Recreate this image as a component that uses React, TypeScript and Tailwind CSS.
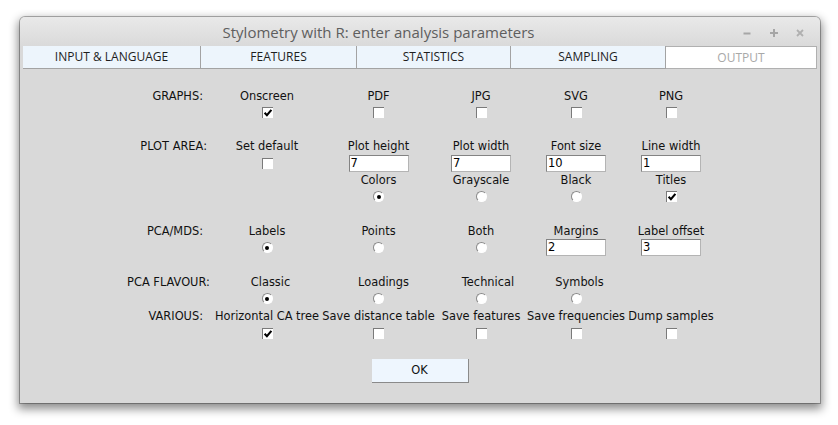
import React from "react";

const Check = ({ checked }: { checked?: boolean }) => (
  <div className="relative w-[11px] h-[11px] bg-white border-t border-l border-[#7a7a7a]">
    {checked && (
      <svg className="absolute left-[0px] top-[0px]" width="10" height="10" viewBox="0 0 10 10">
        <path d="M1.6 4.8 L3.9 7.2 L8.4 1.8" stroke="#000" strokeWidth="2.1" fill="none" />
      </svg>
    )}
  </div>
);

const Radio = ({ checked }: { checked?: boolean }) => (
  <div className="w-[11px] h-[11px] rounded-full bg-white border border-t-[#8a8a8a] border-l-[#8a8a8a] border-r-white border-b-white flex items-center justify-center">
    {checked && <div className="w-[4px] h-[4px] rounded-full bg-black" />}
  </div>
);

const Entry = ({ v }: { v: string }) => (
  <div className="w-[60px] h-[17px] bg-white border border-[#b4b4b4] border-t-[#838383] border-l-[#838383] pl-[1px] text-[11.5px] leading-[15px] text-black">
    {v}
  </div>
);

const L = ({ t }: { t: string }) => <span className="whitespace-nowrap">{t}</span>;

type Row = { h: string; label?: boolean; cells?: React.ReactNode[] };

const rows: Row[] = [
  {
    h: "h-[17px]",
    label: true,
    cells: [
      <div className="w-full text-right pr-[10px]">GRAPHS:</div>,
      <L t="Onscreen" />,
      <L t="PDF" />,
      <L t="JPG" />,
      <L t="SVG" />,
      <L t="PNG" />,
    ],
  },
  {
    h: "h-[17px]",
    cells: [null, <Check checked />, <Check />, <Check />, <Check />, <Check />],
  },
  { h: "h-[16px]" },
  {
    h: "h-[17px]",
    label: true,
    cells: [
      <div className="w-full text-right pr-[6px]">PLOT AREA:</div>,
      <L t="Set default" />,
      <L t="Plot height" />,
      <L t="Plot width" />,
      <L t="Font size" />,
      <L t="Line width" />,
    ],
  },
  {
    h: "h-[18px]",
    cells: [null, <Check />, <Entry v="7" />, <Entry v="7" />, <Entry v="10" />, <Entry v="1" />],
  },
  {
    h: "h-[16px]",
    label: true,
    cells: [null, null, <L t="Colors" />, <L t="Grayscale" />, <L t="Black" />, <L t="Titles" />],
  },
  {
    h: "h-[17px]",
    cells: [null, null, <Radio checked />, <Radio />, <Radio />, <Check checked />],
  },
  { h: "h-[17px]" },
  {
    h: "h-[17px]",
    label: true,
    cells: [
      <div className="w-full text-right pr-[10px]">PCA/MDS:</div>,
      <L t="Labels" />,
      <L t="Points" />,
      <L t="Both" />,
      <L t="Margins" />,
      <L t="Label offset" />,
    ],
  },
  {
    h: "h-[17px]",
    cells: [null, <Radio checked />, <Radio />, <Radio />, <Entry v="2" />, <Entry v="3" />],
  },
  { h: "h-[17px]" },
  {
    h: "h-[17px]",
    label: true,
    cells: [
      <div className="w-full text-center">PCA FLAVOUR:</div>,
      <div className="pl-[7px]">Classic</div>,
      <div className="pl-[10px]">Loadings</div>,
      <div className="pl-[14px]">Technical</div>,
      <div className="pl-[7px]">Symbols</div>,
      null,
    ],
  },
  {
    h: "h-[17px]",
    cells: [null, <Radio checked />, <Radio />, <Radio />, <Radio />, null],
  },
  {
    h: "h-[18px]",
    label: true,
    cells: [
      <div className="w-full text-right pr-[10px]">VARIOUS:</div>,
      <L t="Horizontal CA tree" />,
      <L t="Save distance table" />,
      <L t="Save features" />,
      <L t="Save frequencies" />,
      <L t="Dump samples" />,
    ],
  },
  {
    h: "h-[17px]",
    cells: [null, <Check checked />, <Check />, <Check />, <Check />, <Check />],
  },
];

const tabs = [
  { t: "INPUT & LANGUAGE", w: "w-[178px]" },
  { t: "FEATURES", w: "w-[156px]" },
  { t: "STATISTICS", w: "w-[154px]" },
  { t: "SAMPLING", w: "w-[155px]" },
];

export default function App() {
  return (
    <div className="w-[838px] h-[425px] bg-white pt-[17px] pl-[20px] overflow-hidden font-['DejaVu_Sans',sans-serif]">
      <div className="w-[800px] h-[386px] bg-[#d9d9d9] rounded-t-[5px] shadow-[0_0_0_1px_rgba(0,0,0,0.28),0_4px_10px_2px_rgba(0,0,0,0.45)] flex flex-col">
        {/* title bar */}
        <div className="h-[29px] shrink-0 flex items-center rounded-t-[5px] bg-linear-to-b from-[#e9e9e9] to-[#dadada]">
          <div className="flex-1 text-center pt-[2px] font-['Open_Sans',sans-serif] text-[15px] text-[#5e5e5e]">
            Stylometry with R: enter analysis parameters
          </div>
          <div className="w-[83px] h-full flex items-center pt-[3px]">
            <svg className="ml-[6px]" width="8" height="8" viewBox="0 0 8 8">
              <path d="M0.5 4.5 H7.5" stroke="#a6a6a6" strokeWidth="2" />
            </svg>
            <svg className="ml-[19px]" width="8" height="8" viewBox="0 0 8 8">
              <path d="M0 4 H8 M4 0 V8" stroke="#a6a6a6" strokeWidth="2" />
            </svg>
            <svg className="ml-[18px]" width="8" height="8" viewBox="0 0 8 8">
              <path d="M1 1 L7 7 M7 1 L1 7" stroke="#b0b0b0" strokeWidth="1.8" />
            </svg>
          </div>
        </div>
        {/* tabs */}
        <div className="h-[23px] shrink-0 flex px-[3px] font-['Open_Sans',sans-serif] text-[12px]">
          {tabs.map((tb) => (
            <div
              key={tb.t}
              className={`${tb.w} h-full bg-[#edf5fc] border-r border-b border-[#a3a3a3] flex items-center justify-center text-[#1e1e1e]`}
            >
              {tb.t}
            </div>
          ))}
          <div className="w-[151px] h-full bg-white border-t border-r border-b border-[#b0b0b0] flex items-center justify-center text-[#a8a8a8]">
            OUTPUT
          </div>
        </div>
        {/* content */}
        <div className="flex flex-col items-center pt-[18px] text-[11.4px] text-[#111]">
          <div className="grid grid-cols-[89px_108px_115px_90px_100px_90px]">
            {rows.map((r, i) =>
              r.cells ? (
                r.cells.map((c, j) => (
                  <div
                    key={`${i}-${j}`}
                    className={`${r.h} ${r.label ? "pt-[2px]" : ""} flex items-center justify-center whitespace-nowrap`}
                  >
                    {c}
                  </div>
                ))
              ) : (
                <div key={`${i}`} className={`${r.h} col-span-6`} />
              )
            )}
          </div>
          <div className="mt-[17px] w-[97px] h-[24px] bg-[#eef6fe] border-r border-b border-[#8a8a8a] flex items-center justify-center">
            OK
          </div>
        </div>
      </div>
    </div>
  );
}
